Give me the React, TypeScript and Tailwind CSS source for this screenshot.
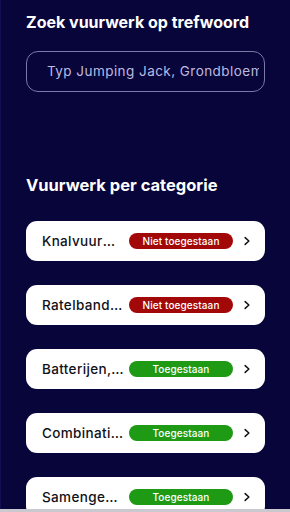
type Category = {
    name: string;
    allowed: boolean;
};

const categories: Category[] = [
    { name: "Knalvuurwerk", allowed: false },
    { name: "Ratelbanden", allowed: false },
    { name: "Batterijen, cakes en compounds", allowed: true },
    { name: "Combinatiepakketten", allowed: true },
    { name: "Samengestelde vuurwerkartikelen", allowed: true },
];

function CategoryCard({ category }: { category: Category }) {
    return (
        <button className="flex h-[40px] w-full shrink-0 items-center rounded-[11px] bg-white pl-[16px] pr-[15px] text-left">
            <span className="min-w-0 flex-1 truncate pr-[4px] text-[13.5px] font-medium tracking-[0.35px] text-[#111118]">
                {category.name}
            </span>
            <span
                className={`flex h-[16px] w-[104px] shrink-0 items-center justify-center rounded-full text-[10px] font-medium tracking-[0.1px] text-white ${
                    category.allowed ? "bg-[#1e9a14]" : "bg-[#a30808]"
                }`}
            >
                {category.allowed ? "Toegestaan" : "Niet toegestaan"}
            </span>
            <svg viewBox="0 0 8 12" className="ml-[11px] h-[12px] w-[6px] shrink-0" fill="none">
                <polyline points="1.5,1.5 6.5,6 1.5,10.5" stroke="#111118" strokeWidth="2" strokeLinecap="round" strokeLinejoin="round" />
            </svg>
        </button>
    );
}

export default function App() {
    return (
        <div
            className="flex h-[512px] w-full flex-col overflow-hidden bg-[#070539]"
            style={{ fontFamily: "Inter, 'Noto Sans', sans-serif" }}
        >
            <div className="flex min-h-0 flex-1 flex-col overflow-hidden border-l border-[#100f52] px-[25px] pt-[10px]">
                {/* Search */}
                <h1 className="shrink-0 text-[16px] font-bold leading-[24px] text-white">Zoek vuurwerk op trefwoord</h1>
                <div className="mt-[17px] flex h-[41px] shrink-0 items-center overflow-hidden rounded-[12px] border border-[#7c79a8] pl-[20px] pr-[5px]">
                    <span className="overflow-hidden whitespace-nowrap text-[13.5px] tracking-[0.45px] text-[#bdbae0]">
                        Typ Jumping Jack, Grondbloem
                    </span>
                </div>

                {/* Categories */}
                <h2 className="mt-[81px] shrink-0 text-[16.5px] font-bold leading-[24px] text-white">Vuurwerk per categorie</h2>
                <div className="mt-[24px] flex shrink-0 flex-col gap-[24px]">
                    {categories.map((category) => (
                        <CategoryCard key={category.name} category={category} />
                    ))}
                </div>
            </div>
            <div className="h-[3px] w-full shrink-0 bg-[#c9c9cf]" />
        </div>
    );
}
